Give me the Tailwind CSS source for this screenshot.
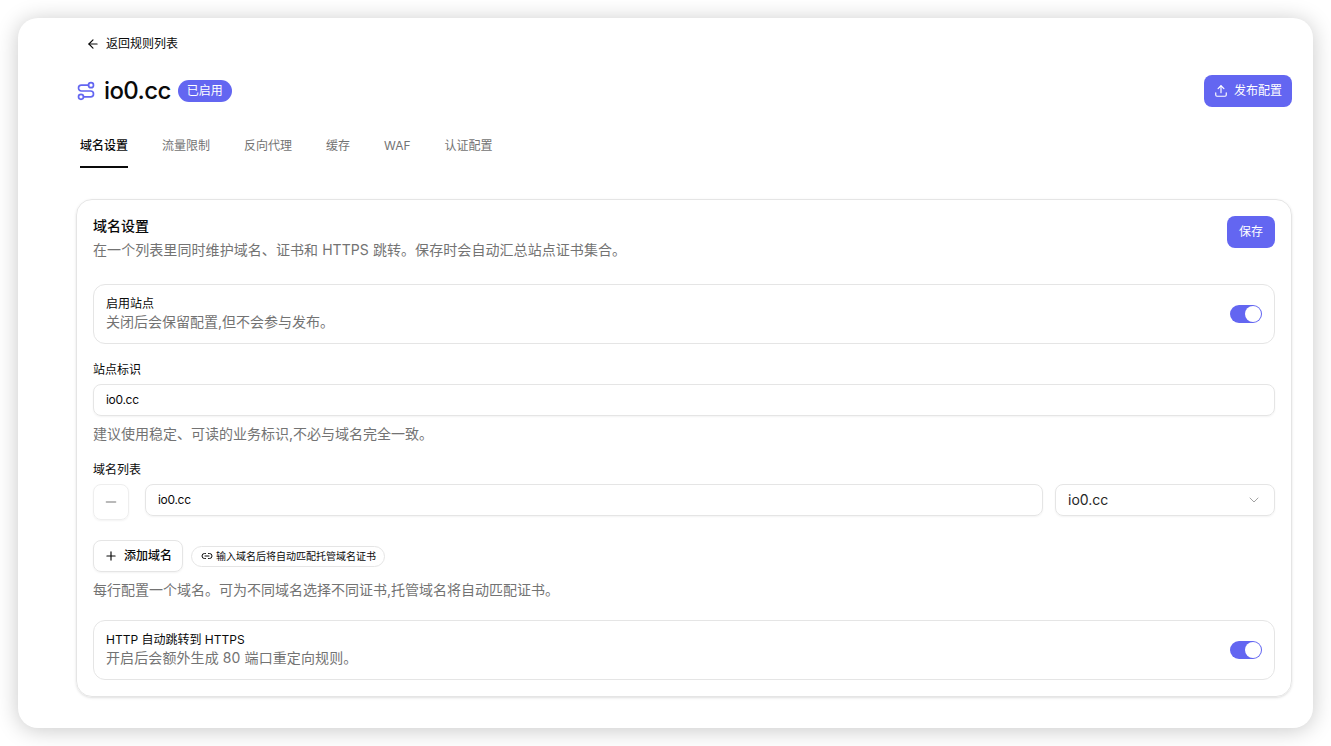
<!DOCTYPE html>
<html lang="zh-CN">
<head>
    <meta charset="UTF-8">
    <title>io0.cc</title>
    <script src="https://cdn.jsdelivr.net/npm/@tailwindcss/browser@4"></script>
</head>
<body class="bg-white font-['Inter','Noto_Sans_CJK_SC',sans-serif] text-[#0a0a0a] overflow-hidden">
    <div class="w-[1331px] h-[746px] pt-[18px] pl-[18px]">
        <div class="w-[1295px] h-[710px] bg-white rounded-[20px] shadow-[0_2px_22px_rgba(0,0,0,0.22)] pl-[58px] pr-[21px] overflow-hidden">
            <!-- Back link -->
            <div class="h-[50px] flex items-center pl-[10px] gap-[6px] text-xs pt-px">
                <svg class="w-[14px] h-[14px]" viewBox="0 0 24 24" fill="none" stroke="currentColor" stroke-width="2" stroke-linecap="round" stroke-linejoin="round"><path d="m12 19-7-7 7-7"/><path d="M19 12H5"/></svg>
                <span>返回规则列表</span>
            </div>

            <!-- Title -->
            <div class="h-[46px] flex items-center justify-between">
                <div class="flex items-center">
                    <svg class="w-[20px] h-[20px] text-[#6366f1]" viewBox="0 0 24 24" fill="none" stroke="currentColor" stroke-width="2" stroke-linecap="round" stroke-linejoin="round"><circle cx="6" cy="19" r="3"/><path d="M9 19h8.5a3.5 3.5 0 0 0 0-7h-11a3.5 3.5 0 0 1 0-7H15"/><circle cx="18" cy="5" r="3"/></svg>
                    <span class="ml-[8px] text-2xl font-medium tracking-[-0.6px]">io0.cc</span>
                    <span class="ml-[7px] h-[22px] px-[9px] flex items-center rounded-full bg-[#6366f1] text-white text-xs">已启用</span>
                </div>
                <button class="w-[88px] h-8 flex items-center justify-center gap-[6px] rounded-lg bg-[#6366f1] text-white text-xs">
                    <svg class="w-[14px] h-[14px]" viewBox="0 0 24 24" fill="none" stroke="currentColor" stroke-width="2" stroke-linecap="round" stroke-linejoin="round"><path d="M12 3v12"/><path d="m17 8-5-5-5 5"/><path d="M21 15v4a2 2 0 0 1-2 2H5a2 2 0 0 1-2-2v-4"/></svg>
                    发布配置
                </button>
            </div>

            <!-- Tabs -->
            <div class="mt-[10px] pl-1 h-[44px] flex gap-[34px] text-xs text-[#737373]">
                <div class="h-full flex items-center pt-0.5 border-b-2 border-[#0a0a0a] text-[#0a0a0a] font-medium">域名设置</div>
                <div class="h-full flex items-center pb-px">流量限制</div>
                <div class="h-full flex items-center pb-px">反向代理</div>
                <div class="h-full flex items-center pb-px">缓存</div>
                <div class="h-full flex items-center pb-px">WAF</div>
                <div class="h-full flex items-center pb-px">认证配置</div>
            </div>

            <!-- Card -->
            <div class="mt-[31px] h-[498px] border border-[#e5e5e5] rounded-2xl shadow-sm px-4 pt-4">
                <div class="flex justify-between">
                    <div>
                        <div class="text-sm font-medium leading-5">域名设置</div>
                        <div class="text-sm text-[#737373] leading-5 mt-1 tracking-[0.07px]">在一个列表里同时维护域名、证书和 HTTPS 跳转。保存时会自动汇总站点证书集合。</div>
                    </div>
                    <button class="w-12 h-8 rounded-lg bg-[#6366f1] text-white text-xs">保存</button>
                </div>

                <div class="mt-6 h-[60px] border border-[#e5e5e5] rounded-xl px-3 flex items-center justify-between">
                    <div>
                        <div class="text-xs leading-4">启用站点</div>
                        <div class="text-sm text-[#737373] leading-[20px]">关闭后会保留配置,但不会参与发布。</div>
                    </div>
                    <div class="w-8 h-[18px] rounded-full bg-[#6366f1] flex items-center justify-end pr-px">
                        <div class="w-4 h-4 rounded-full bg-white"></div>
                    </div>
                </div>

                <div class="mt-[16px] text-xs leading-[18px] pt-px">站点标识</div>
                <div class="mt-[5px] h-8 border border-[#e5e5e5] rounded-lg px-3 flex items-center text-xs tracking-[-0.3px] shadow-xs">io0.cc</div>
                <div class="mt-2 text-sm text-[#737373] leading-5">建议使用稳定、可读的业务标识,不必与域名完全一致。</div>

                <div class="mt-[17px] text-xs leading-[18px]">域名列表</div>
                <div class="mt-[5px] flex items-start">
                    <div class="w-9 h-9 border border-[#eeeeee] rounded-lg flex items-center justify-center text-[#a3a3a3] shadow-xs">
                        <svg class="w-4 h-4" viewBox="0 0 24 24" fill="none" stroke="currentColor" stroke-width="2" stroke-linecap="round"><path d="M5 12h14"/></svg>
                    </div>
                    <div class="ml-4 flex-1 h-8 border border-[#e5e5e5] rounded-lg px-3 flex items-center text-xs tracking-[-0.3px] shadow-xs">io0.cc</div>
                    <div class="ml-3 w-[220px] h-8 border border-[#e5e5e5] rounded-lg pl-3 pr-3 flex items-center justify-between text-sm text-[#262626] shadow-xs">
                        <span>io0.cc</span>
                        <svg class="w-4 h-4 text-[#a3a3a3]" viewBox="0 0 24 24" fill="none" stroke="currentColor" stroke-width="1.5" stroke-linecap="round" stroke-linejoin="round"><path d="m6 9 6 6 6-6"/></svg>
                    </div>
                </div>

                <div class="mt-5 flex items-center">
                    <div class="w-[90px] h-8 border border-[#e5e5e5] rounded-lg flex items-center justify-center gap-[6px] text-xs font-medium shadow-xs">
                        <svg class="w-[14px] h-[14px]" viewBox="0 0 24 24" fill="none" stroke="currentColor" stroke-width="2" stroke-linecap="round"><path d="M5 12h14"/><path d="M12 5v14"/></svg>
                        添加域名
                    </div>
                    <div class="ml-2 h-[21px] w-[194px] border border-[#e5e5e5] rounded-full flex items-center pl-[9px] gap-[3px] text-[10px]">
                        <svg class="w-3 h-3" viewBox="0 0 24 24" fill="none" stroke="currentColor" stroke-width="2" stroke-linecap="round"><path d="M9 17H7A5 5 0 0 1 7 7h2"/><path d="M15 7h2a5 5 0 1 1 0 10h-2"/><path d="M8 12h8"/></svg>
                        输入域名后将自动匹配托管域名证书
                    </div>
                </div>
                <div class="mt-2 text-sm text-[#737373] leading-5">每行配置一个域名。可为不同域名选择不同证书,托管域名将自动匹配证书。</div>

                <div class="mt-5 h-[60px] border border-[#e5e5e5] rounded-xl px-3 flex items-center justify-between">
                    <div>
                        <div class="text-xs leading-4">HTTP 自动跳转到 HTTPS</div>
                        <div class="text-sm text-[#737373] leading-[20px] tracking-[0.1px]">开启后会额外生成 80 端口重定向规则。</div>
                    </div>
                    <div class="w-8 h-[18px] rounded-full bg-[#6366f1] flex items-center justify-end pr-px">
                        <div class="w-4 h-4 rounded-full bg-white"></div>
                    </div>
                </div>
            </div>
        </div>
    </div>
</body>
</html>
